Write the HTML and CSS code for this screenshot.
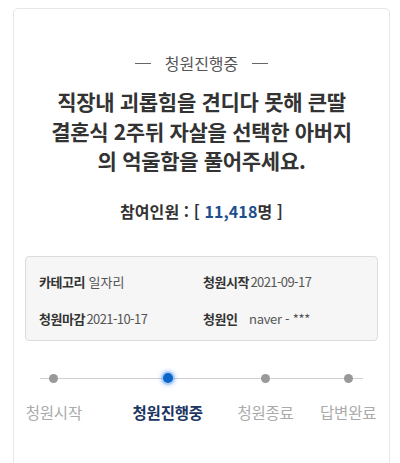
FILE: index.html
```html
<!DOCTYPE html>
<html lang="ko">
<head>
<meta charset="utf-8">
<link rel="stylesheet" href="styles.css">
</head>
<body>
<div class="page">
  <div class="card">
    <p class="status"><span class="dash"></span>청원진행중<span class="dash"></span></p>
    <h1 class="title">직장내 괴롭힘을 견디다 못해 큰딸<br>결혼식 2주뒤 자살을 선택한 아버지<br>의 억울함을 풀어주세요.</h1>
    <p class="count">참여인원 : [ <span class="num">11,418</span>명 ]</p>
    <div class="info">
      <div class="info-row">
        <div class="cell"><b>카테고리</b> <span class="val">일자리</span></div>
        <div class="cell"><b>청원시작</b> <span class="val narrow">2021-09-17</span></div>
      </div>
      <div class="info-row">
        <div class="cell"><b>청원마감</b> <span class="val narrow">2021-10-17</span></div>
        <div class="cell"><b>청원인</b> <span class="val author">naver - ***</span></div>
      </div>
    </div>
    <ul class="steps">
      <li class="step s1"><span class="dot"></span><span class="label">청원시작</span></li>
      <li class="step s2 active"><span class="dot"></span><span class="label">청원진행중</span></li>
      <li class="step s3"><span class="dot"></span><span class="label">청원종료</span></li>
      <li class="step s4"><span class="dot"></span><span class="label">답변완료</span></li>
    </ul>
  </div>
</div>
</body>
</html>
```

FILE: styles.css
```css
html, body {
  margin: 0;
  padding: 0;
  background: #fff;
}
body {
  font-family: "Noto Sans CJK KR", "Noto Sans", sans-serif;
  color: #333;
}
.page {
  padding: 8px 10px 0 13px;
  height: 455px;
  overflow: hidden;
}
.card {
  border: 1px solid #e6e6e6;
  border-radius: 5px;
  padding: 0 11px 60px 11px;
  min-height: 500px;
}
.status {
  margin: 43px 0 0 0;
  display: flex;
  justify-content: center;
  align-items: center;
  gap: 14px;
  font-size: 16px;
  line-height: 22px;
  color: #555;
}
.dash {
  display: block;
  width: 16px;
  height: 1px;
  background: #666;
}
.title {
  margin: 13px 0 0 0;
  text-align: center;
  font-size: 21px;
  line-height: 29.5px;
  font-weight: 700;
  color: #333;
  letter-spacing: -0.3px;
}
.count {
  margin: 24px 0 0 0;
  text-align: center;
  font-size: 16px;
  line-height: 22px;
  font-weight: 700;
  color: #333;
  letter-spacing: 0.1px;
}
.num {
  color: #1d4f8f;
}
.info {
  margin-top: 34px;
  background: #f6f6f6;
  border: 1px solid #dcdcdc;
  border-radius: 4px;
  padding: 16px 0 12px 13px;
}
.info-row {
  display: grid;
  grid-template-columns: 164px 1fr;
  font-size: 13px;
  line-height: 18px;
}
.info-row + .info-row {
  margin-top: 19px;
}
.cell b {
  font-weight: 700;
  color: #333;
  letter-spacing: -0.5px;
}
.val {
  color: #555;
}
.narrow {
  letter-spacing: -0.6px;
  margin-left: -2px;
}
.author {
  margin-left: 8px;
  letter-spacing: -0.3px;
}
.steps {
  list-style: none;
  margin: 32px 0 0 0;
  padding: 0;
  position: relative;
  display: flex;
}
.steps::before {
  content: "";
  position: absolute;
  left: 15px;
  right: 15px;
  top: 5px;
  height: 1px;
  background: #cfcfcf;
}
.step {
  width: 60px;
  display: flex;
  flex-direction: column;
  align-items: center;
  position: relative;
}
.s1 { margin-left: -1px; }
.s2 { margin-left: 54px; }
.s3 { margin-left: 38px; }
.s4 { margin-left: 23px; }
.dot {
  width: 9px;
  height: 9px;
  border-radius: 50%;
  background: #999;
  margin-top: 1px;
}
.active .dot {
  width: 10px;
  height: 10px;
  margin-top: 0;
  background: #0a66c8;
  box-shadow: 0 0 0 2px rgba(80, 150, 240, 0.35), 0 0 3px 4px rgba(120, 175, 245, 0.25);
}
.label {
  margin-top: 19px;
  font-size: 15.5px;
  line-height: 20px;
  color: #aaa;
  letter-spacing: -0.2px;
  white-space: nowrap;
}
.active .label {
  color: #1b3560;
  font-weight: 700;
}
```
